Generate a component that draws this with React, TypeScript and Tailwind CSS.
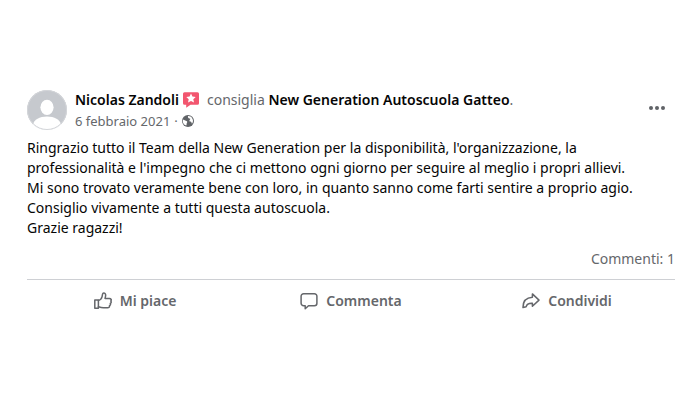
import type { ReactNode } from 'react';

const REVIEW_LINES = [
  "Ringrazio tutto il Team della New Generation per la disponibilità, l'organizzazione, la",
  "professionalità e l'impegno che ci mettono ogni giorno per seguire al meglio i propri allievi.",
  'Mi sono trovato veramente bene con loro, in quanto sanno come farti sentire a proprio agio.',
  'Consiglio vivamente a tutti questa autoscuola.',
  'Grazie ragazzi!'
];

function Avatar() {
  return (
    <svg viewBox="0 0 40 40" className="size-10 shrink-0" role="img" aria-label="Nicolas Zandoli">
      <defs>
        <clipPath id="avatar-clip">
          <circle cx="20" cy="20" r="20" />
        </clipPath>
      </defs>
      <g clipPath="url(#avatar-clip)">
        <rect width="40" height="40" fill="#c6c9ce" />
        <ellipse cx="20" cy="17.3" rx="6.6" ry="7.6" fill="#fff" />
        <path d="M6 40V34.5C7 29.5 12.5 26.5 20 26.5S33 29.5 34 34.5V40Z" fill="#fff" />
      </g>
      <circle cx="20" cy="20" r="19.5" fill="none" stroke="#d3d5d9" />
    </svg>
  );
}

function RecommendIcon() {
  return (
    <svg viewBox="0 0 16 16" className="size-4 shrink-0" aria-hidden="true">
      <path d="M1.5.3h13A1.5 1.5 0 0 1 16 1.8v9.4a1.5 1.5 0 0 1-1.5 1.5H7.5l-4.300 3V12.700H1.500A1.500 1.500 0 0 1 0 11.200V1.800A1.500 1.500 0 0 1 1.500.3Z" fill="#f2566f" />
      <path d="m8 1.500 1.400 3.100 3.300.4-2.400 2.300.7 3.300L8 9l-3 1.600.7-3.300L3.300 5l3.300-.4Z" fill="#fff" />
    </svg>
  );
}

function GlobeIcon() {
  return (
    <svg viewBox="0 0 12 12" className="size-3" aria-hidden="true">
      <circle cx="6" cy="6" r="6" fill="#606367" />
      <path d="M.9 4.600C1.700 5 2.400 5.200 3.200 5.500c.9.200 1.700.5 2 1.200.2.600-.4 1-.5 1.600-.1.700.1 1.300-.4 2.300C2.500 10 1 8.400.8 6.400Z" fill="#fff" />
      <path d="M6 1.100c1.700-.1 3.400.8 4.300 2.300.5.800.7 1.700.7 2.600-.1 1-.4 1.900-1 2.700-.5-.4-.4-1.100-.7-1.600-.4-.6-1.400-.2-1.800-.9-.3-.7.2-1.400.7-1.900.3-.4-.1-.8-.6-.9-.8-.1-1.300-.4-1.500-1-.1-.4-.3-.9-.1-1.300Z" fill="#fff" />
    </svg>
  );
}

function LikeIcon() {
  return (
    <svg viewBox="0 0 18 18" className="size-[18px]" fill="none" stroke="#65676b" strokeWidth="1.5" strokeLinejoin="round" strokeLinecap="round" aria-hidden="true">
      <path d="M.8 8h3.600v8.300H.8Z" />
      <path d="M4.400 8.500c2-.5 3.200-2 3.700-3.900l.4-2.300c.3-1.800 2.800-1.600 3.100.3.200 1.300-.1 2.500-.6 3.800h4.400c1.700 0 2.400 1.500 1.400 2.600.7.900.5 2-.5 2.500.4.900.1 1.700-.8 2.100.2 1.400-.6 2.200-1.900 2.200H9.400c-1.900 0-3.200-.4-5-1" />
    </svg>
  );
}

function CommentIcon() {
  return (
    <svg viewBox="0 0 18 18" className="size-[18px]" fill="none" stroke="#65676b" strokeWidth="1.5" strokeLinejoin="round" aria-hidden="true">
      <path d="M3.600 1.800h10.800a2.500 2.500 0 0 1 2.500 2.500v6.900a2.500 2.500 0 0 1-2.500 2.500H8.500l-3.300 3v-3H3.600a2.500 2.500 0 0 1-2.500-2.500V4.300a2.500 2.500 0 0 1 2.500-2.500Z" />
    </svg>
  );
}

function ShareIcon() {
  return (
    <svg viewBox="0 0 18 18" className="size-[18px]" fill="none" stroke="#65676b" strokeWidth="1.5" strokeLinejoin="round" aria-hidden="true">
      <path d="M10.400 1.900 17 8.100l-6.600 6.200v-3.100c-3.700-.2-5.600.5-6.300 3.600L1 15.500c-.1-6.200 3.600-9.900 9.400-10.300Z" />
    </svg>
  );
}

function ActionButton({ icon, label }: { icon: ReactNode; label: string }) {
  return (
    <button type="button" className="flex h-8 flex-1 items-center justify-center gap-2 rounded font-semibold text-[#65676b] hover:bg-gray-100">
      {icon}
      {label}
    </button>
  );
}

export default function App() {
  return (
    <main className="flex min-h-screen flex-col bg-white pt-[90px] pr-[25px] pl-[27px] font-['Noto_Sans',sans-serif] text-sm leading-5 text-[#050505]">
      <article>
        <header className="flex items-start gap-2">
          <Avatar />
          <div className="min-w-0 flex-1">
            <div className="flex items-center gap-1 whitespace-nowrap text-[#65676b]">
              <a href="#profile" className="font-semibold text-[#050505]">Nicolas Zandoli</a>
              <RecommendIcon />
              <span className="pl-1">
                consiglia <a href="#page" className="font-semibold text-[#050505]">New Generation Autoscuola Gatteo</a>.
              </span>
            </div>
            <div className="flex items-center gap-1 text-[13px] leading-[22px] text-[#65676b]">
              <a href="#post">6 febbraio 2021</a>
              <span>·</span>
              <GlobeIcon />
            </div>
          </div>
          <button type="button" aria-label="Altro" className="flex size-9 items-center justify-center rounded-full hover:bg-gray-100">
            <svg viewBox="0 0 16 4" className="h-1 w-4" fill="#606367" aria-hidden="true">
              <circle cx="2" cy="2" r="2" />
              <circle cx="8" cy="2" r="2" />
              <circle cx="14" cy="2" r="2" />
            </svg>
          </button>
        </header>

        <div className="pt-[6px]">
          {REVIEW_LINES.map(line => (
            <p key={line}>{line}</p>
          ))}
        </div>

        <div className="flex justify-end border-b border-[#ced0d4] pt-[11px] pb-[10px]">
          <a href="#comments" className="text-[#65676b]">Commenti: 1</a>
        </div>

        <div className="flex pt-[5px]">
          <ActionButton icon={<LikeIcon />} label="Mi piace" />
          <ActionButton icon={<CommentIcon />} label="Commenta" />
          <ActionButton icon={<ShareIcon />} label="Condividi" />
        </div>
      </article>
    </main>
  );
}
